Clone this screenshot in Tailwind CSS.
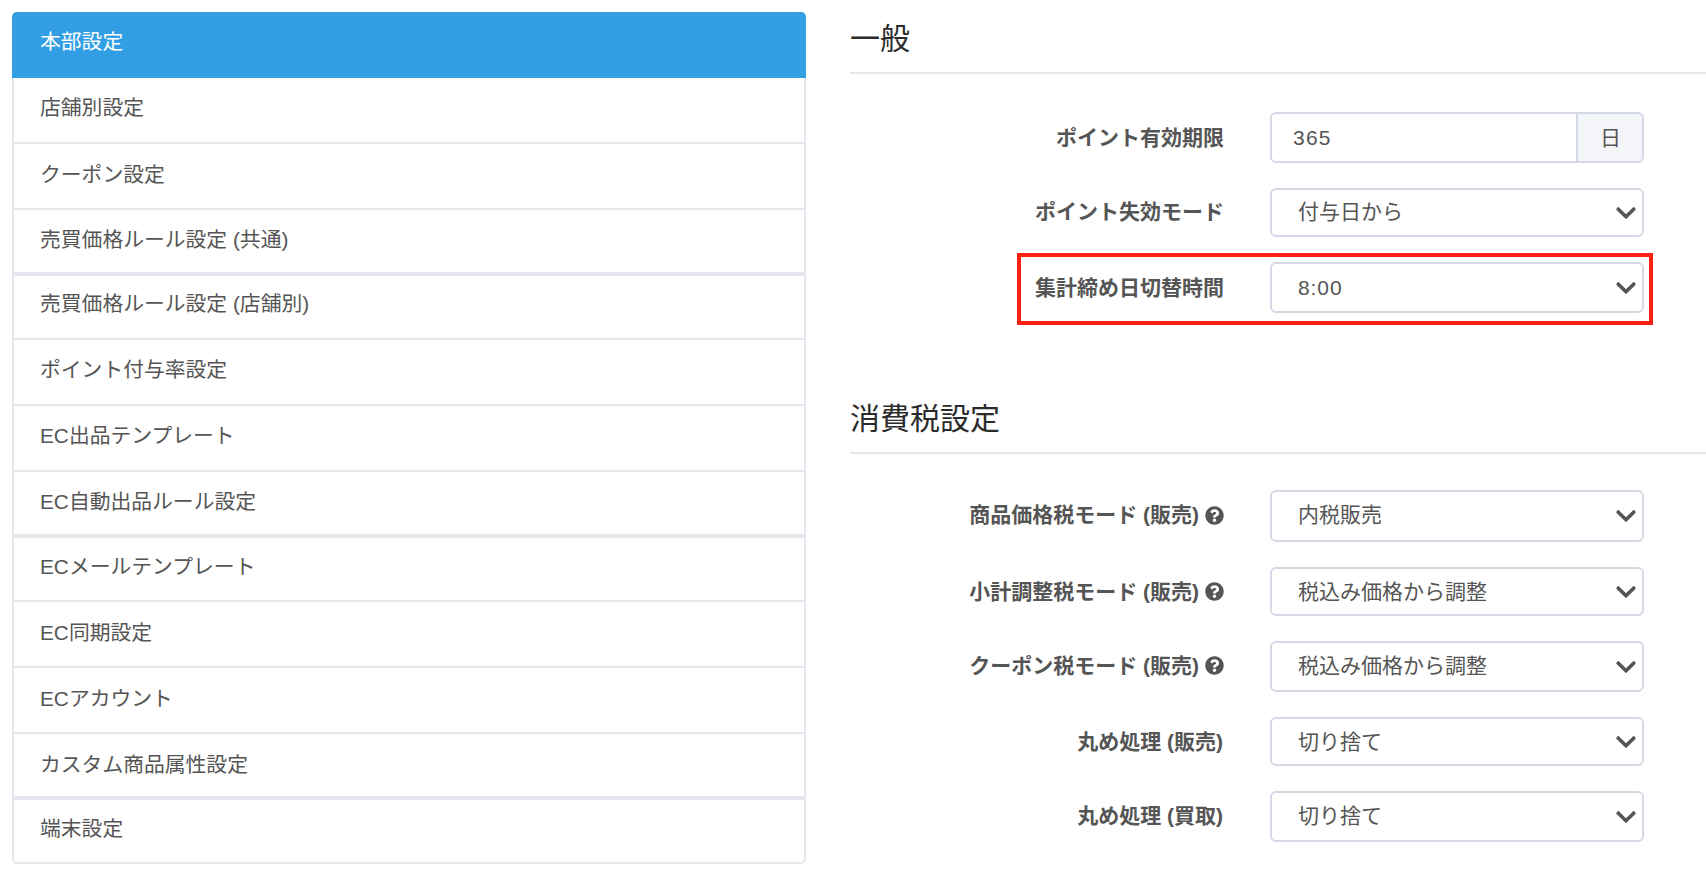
<!DOCTYPE html>
<html lang="ja">
<head>
  <meta charset="UTF-8">
  <title>本部設定</title>
  <script src="https://cdn.jsdelivr.net/npm/@tailwindcss/browser@4"></script>
</head>
<body class="bg-white h-screen overflow-hidden font-['Liberation_Sans','Noto_Sans_CJK_JP',sans-serif] text-[21px] text-[#555]">
  <div class="flex">

    <!-- sidebar -->
    <nav class="ml-[12px] mt-[12px] w-[794px] shrink-0 flex flex-col text-[20.8px]">
      <div class="border-2 border-[#e4e8ee] rounded-t-[5px]">
        <a class="block -mx-[2px] -mt-[2px] h-[66px] pl-[28px] leading-[60px] bg-[#329fe5] text-white rounded-t-[5px]">本部設定</a>
        <a class="block h-[66px] pl-[26px] leading-[60px] border-b-2 border-[#e4e8ee]">店舗別設定</a>
        <a class="block h-[66px] pl-[26px] leading-[62px] border-b-2 border-[#e4e8ee]">クーポン設定</a>
        <a class="block h-[62px] pl-[26px] leading-[60px]">売買価格ルール設定 (共通)</a>
      </div>
      <div class="border-2 border-[#e4e8ee]">
        <a class="block h-[64px] pl-[26px] leading-[56px] border-b-2 border-[#e4e8ee]">売買価格ルール設定 (店舗別)</a>
        <a class="block h-[66px] pl-[26px] leading-[60px] border-b-2 border-[#e4e8ee]">ポイント付与率設定</a>
        <a class="block h-[66px] pl-[26px] leading-[60px] border-b-2 border-[#e4e8ee]">EC出品テンプレート</a>
        <a class="block h-[62px] pl-[26px] leading-[60px]">EC自動出品ルール設定</a>
      </div>
      <div class="border-2 border-[#e4e8ee]">
        <a class="block h-[64px] pl-[26px] leading-[58px] border-b-2 border-[#e4e8ee]">ECメールテンプレート</a>
        <a class="block h-[66px] pl-[26px] leading-[62px] border-b-2 border-[#e4e8ee]">EC同期設定</a>
        <a class="block h-[66px] pl-[26px] leading-[62px] border-b-2 border-[#e4e8ee]">ECアカウント</a>
        <a class="block h-[62px] pl-[26px] leading-[62px]">カスタム商品属性設定</a>
      </div>
      <div class="border-2 border-[#e4e8ee] rounded-b-[5px]">
        <a class="block h-[62px] pl-[26px] leading-[58px]">端末設定</a>
      </div>
    </nav>

    <!-- settings form -->
    <main class="ml-[44px] flex-1 pt-[19px]">
      <h2 class="text-[30px] leading-[40px] pb-[13px] border-b-2 border-[#e4e8ee] text-[#2b2b2b]">一般</h2>
      <div class="mt-[38px] flex flex-col gap-[25px]">
        <div class="flex items-center h-[51px]">
          <label class="w-[375px] pr-[1px] text-right font-bold">ポイント有効期限</label>
          <div class="ml-[45px] w-[374px] h-full flex border-2 border-[#d3d9e5] rounded-[6px] overflow-hidden">
            <input type="text" value="365" class="flex-1 min-w-0 pl-[21px] outline-none tracking-[1.2px]">
            <span class="w-[66px] pl-[1px] flex items-center justify-center bg-[#f4f5f8] border-l-2 border-[#d3d9e5]">日</span>
          </div>
        </div>
        <div class="flex items-center h-[49px]">
          <label class="w-[375px] pr-[1px] pb-[2px] text-right font-bold">ポイント失効モード</label>
          <div class="relative ml-[45px] w-[374px] h-full">
            <select class="appearance-none w-full h-full pl-[26px] pb-[2px] border-2 border-[#d3d9e5] rounded-[6px] bg-white outline-none"><option>付与日から</option></select>
            <svg class="absolute right-[8px] top-1/2 -translate-y-1/2 w-[20px] h-[23px] fill-[#555]" viewBox="0 0 448 512"><path d="M207.029 381.476L12.686 187.132c-9.373-9.373-9.373-24.569 0-33.941l22.667-22.667c9.357-9.357 24.522-9.375 33.901-.04L224 284.505l154.745-154.021c9.379-9.335 24.544-9.317 33.901.04l22.667 22.667c9.373 9.373 9.373 24.569 0 33.941L240.971 381.476c-9.373 9.372-24.569 9.372-33.942 0z"/></svg>
          </div>
        </div>
        <div class="relative flex items-center h-[51px]">
          <label class="w-[375px] pr-[1px] text-right font-bold">集計締め日切替時間</label>
          <div class="relative ml-[45px] w-[374px] h-full">
            <select class="appearance-none w-full h-full pl-[26px] border-2 border-[#d3d9e5] rounded-[6px] bg-white outline-none tracking-[0.9px]"><option>8:00</option></select>
            <svg class="absolute right-[8px] top-1/2 -translate-y-1/2 w-[20px] h-[23px] fill-[#555]" viewBox="0 0 448 512"><path d="M207.029 381.476L12.686 187.132c-9.373-9.373-9.373-24.569 0-33.941l22.667-22.667c9.357-9.357 24.522-9.375 33.901-.04L224 284.505l154.745-154.021c9.379-9.335 24.544-9.317 33.901.04l22.667 22.667c9.373 9.373 9.373 24.569 0 33.941L240.971 381.476c-9.373 9.372-24.569 9.372-33.942 0z"/></svg>
          </div>
          <div class="absolute left-[167px] top-[-9px] w-[636px] h-[72px] border-4 border-[#fb2012] pointer-events-none"></div>
        </div>
      </div>

      <h2 class="mt-[86px] text-[30px] leading-[40px] pb-[13px] border-b-2 border-[#e4e8ee] text-[#2b2b2b]">消費税設定</h2>
      <div class="mt-[36px] flex flex-col gap-[25px]">
        <div class="flex items-center h-[52px]">
          <label class="w-[375px] pr-[1px] pb-[2px] flex items-center justify-end gap-[6px] font-bold">商品価格税モード (販売)
            <svg class="w-[19px] h-[19px] fill-[#555]" viewBox="0 0 512 512"><path d="M504 256c0 136.997-111.043 248-248 248S8 392.997 8 256C8 119.083 119.043 8 256 8s248 111.083 248 248zM262.655 90c-54.497 0-89.255 22.957-116.549 63.758-3.536 5.286-2.353 12.415 2.715 16.258l34.699 26.31c5.205 3.947 12.621 3.008 16.665-2.122 17.864-22.658 30.113-35.797 57.303-35.797 20.429 0 45.698 13.148 45.698 32.958 0 14.976-12.363 22.667-32.534 33.976C247.128 238.528 216 254.941 216 296v4c0 6.627 5.373 12 12 12h56c6.627 0 12-5.373 12-12v-1.333c0-28.462 83.186-29.647 83.186-106.667 0-58.002-60.165-102-116.531-102zM256 338c-25.365 0-46 20.635-46 46 0 25.364 20.635 46 46 46s46-20.636 46-46c0-25.365-20.635-46-46-46z"/></svg>
          </label>
          <div class="relative ml-[45px] w-[374px] h-full">
            <select class="appearance-none w-full h-full pl-[26px] pb-[2px] border-2 border-[#d3d9e5] rounded-[6px] bg-white outline-none"><option>内税販売</option></select>
            <svg class="absolute right-[8px] top-1/2 -translate-y-1/2 w-[20px] h-[23px] fill-[#555]" viewBox="0 0 448 512"><path d="M207.029 381.476L12.686 187.132c-9.373-9.373-9.373-24.569 0-33.941l22.667-22.667c9.357-9.357 24.522-9.375 33.901-.04L224 284.505l154.745-154.021c9.379-9.335 24.544-9.317 33.901.04l22.667 22.667c9.373 9.373 9.373 24.569 0 33.941L240.971 381.476c-9.373 9.372-24.569 9.372-33.942 0z"/></svg>
          </div>
        </div>
        <div class="flex items-center h-[49px]">
          <label class="w-[375px] pr-[1px] flex items-center justify-end gap-[6px] font-bold">小計調整税モード (販売)
            <svg class="w-[19px] h-[19px] fill-[#555]" viewBox="0 0 512 512"><path d="M504 256c0 136.997-111.043 248-248 248S8 392.997 8 256C8 119.083 119.043 8 256 8s248 111.083 248 248zM262.655 90c-54.497 0-89.255 22.957-116.549 63.758-3.536 5.286-2.353 12.415 2.715 16.258l34.699 26.31c5.205 3.947 12.621 3.008 16.665-2.122 17.864-22.658 30.113-35.797 57.303-35.797 20.429 0 45.698 13.148 45.698 32.958 0 14.976-12.363 22.667-32.534 33.976C247.128 238.528 216 254.941 216 296v4c0 6.627 5.373 12 12 12h56c6.627 0 12-5.373 12-12v-1.333c0-28.462 83.186-29.647 83.186-106.667 0-58.002-60.165-102-116.531-102zM256 338c-25.365 0-46 20.635-46 46 0 25.364 20.635 46 46 46s46-20.636 46-46c0-25.365-20.635-46-46-46z"/></svg>
          </label>
          <div class="relative ml-[45px] w-[374px] h-full">
            <select class="appearance-none w-full h-full pl-[26px] border-2 border-[#d3d9e5] rounded-[6px] bg-white outline-none"><option>税込み価格から調整</option></select>
            <svg class="absolute right-[8px] top-1/2 -translate-y-1/2 w-[20px] h-[23px] fill-[#555]" viewBox="0 0 448 512"><path d="M207.029 381.476L12.686 187.132c-9.373-9.373-9.373-24.569 0-33.941l22.667-22.667c9.357-9.357 24.522-9.375 33.901-.04L224 284.505l154.745-154.021c9.379-9.335 24.544-9.317 33.901.04l22.667 22.667c9.373 9.373 9.373 24.569 0 33.941L240.971 381.476c-9.373 9.372-24.569 9.372-33.942 0z"/></svg>
          </div>
        </div>
        <div class="flex items-center h-[51px]">
          <label class="w-[375px] pr-[1px] pb-[2px] flex items-center justify-end gap-[6px] font-bold">クーポン税モード (販売)
            <svg class="w-[19px] h-[19px] fill-[#555]" viewBox="0 0 512 512"><path d="M504 256c0 136.997-111.043 248-248 248S8 392.997 8 256C8 119.083 119.043 8 256 8s248 111.083 248 248zM262.655 90c-54.497 0-89.255 22.957-116.549 63.758-3.536 5.286-2.353 12.415 2.715 16.258l34.699 26.31c5.205 3.947 12.621 3.008 16.665-2.122 17.864-22.658 30.113-35.797 57.303-35.797 20.429 0 45.698 13.148 45.698 32.958 0 14.976-12.363 22.667-32.534 33.976C247.128 238.528 216 254.941 216 296v4c0 6.627 5.373 12 12 12h56c6.627 0 12-5.373 12-12v-1.333c0-28.462 83.186-29.647 83.186-106.667 0-58.002-60.165-102-116.531-102zM256 338c-25.365 0-46 20.635-46 46 0 25.364 20.635 46 46 46s46-20.636 46-46c0-25.365-20.635-46-46-46z"/></svg>
          </label>
          <div class="relative ml-[45px] w-[374px] h-full">
            <select class="appearance-none w-full h-full pl-[26px] pb-[2px] border-2 border-[#d3d9e5] rounded-[6px] bg-white outline-none"><option>税込み価格から調整</option></select>
            <svg class="absolute right-[8px] top-1/2 -translate-y-1/2 w-[20px] h-[23px] fill-[#555]" viewBox="0 0 448 512"><path d="M207.029 381.476L12.686 187.132c-9.373-9.373-9.373-24.569 0-33.941l22.667-22.667c9.357-9.357 24.522-9.375 33.901-.04L224 284.505l154.745-154.021c9.379-9.335 24.544-9.317 33.901.04l22.667 22.667c9.373 9.373 9.373 24.569 0 33.941L240.971 381.476c-9.373 9.372-24.569 9.372-33.942 0z"/></svg>
          </div>
        </div>
        <div class="flex items-center h-[49px]">
          <label class="w-[375px] pr-[2px] text-right font-bold">丸め処理 (販売)</label>
          <div class="relative ml-[45px] w-[374px] h-full">
            <select class="appearance-none w-full h-full pl-[26px] border-2 border-[#d3d9e5] rounded-[6px] bg-white outline-none"><option>切り捨て</option></select>
            <svg class="absolute right-[8px] top-1/2 -translate-y-1/2 w-[20px] h-[23px] fill-[#555]" viewBox="0 0 448 512"><path d="M207.029 381.476L12.686 187.132c-9.373-9.373-9.373-24.569 0-33.941l22.667-22.667c9.357-9.357 24.522-9.375 33.901-.04L224 284.505l154.745-154.021c9.379-9.335 24.544-9.317 33.901.04l22.667 22.667c9.373 9.373 9.373 24.569 0 33.941L240.971 381.476c-9.373 9.372-24.569 9.372-33.942 0z"/></svg>
          </div>
        </div>
        <div class="flex items-center h-[51px]">
          <label class="w-[375px] pr-[2px] pb-[2px] text-right font-bold">丸め処理 (買取)</label>
          <div class="relative ml-[45px] w-[374px] h-full">
            <select class="appearance-none w-full h-full pl-[26px] pb-[2px] border-2 border-[#d3d9e5] rounded-[6px] bg-white outline-none"><option>切り捨て</option></select>
            <svg class="absolute right-[8px] top-1/2 -translate-y-1/2 w-[20px] h-[23px] fill-[#555]" viewBox="0 0 448 512"><path d="M207.029 381.476L12.686 187.132c-9.373-9.373-9.373-24.569 0-33.941l22.667-22.667c9.357-9.357 24.522-9.375 33.901-.04L224 284.505l154.745-154.021c9.379-9.335 24.544-9.317 33.901.04l22.667 22.667c9.373 9.373 9.373 24.569 0 33.941L240.971 381.476c-9.373 9.372-24.569 9.372-33.942 0z"/></svg>
          </div>
        </div>
      </div>
    </main>
  </div>
</body>
</html>
